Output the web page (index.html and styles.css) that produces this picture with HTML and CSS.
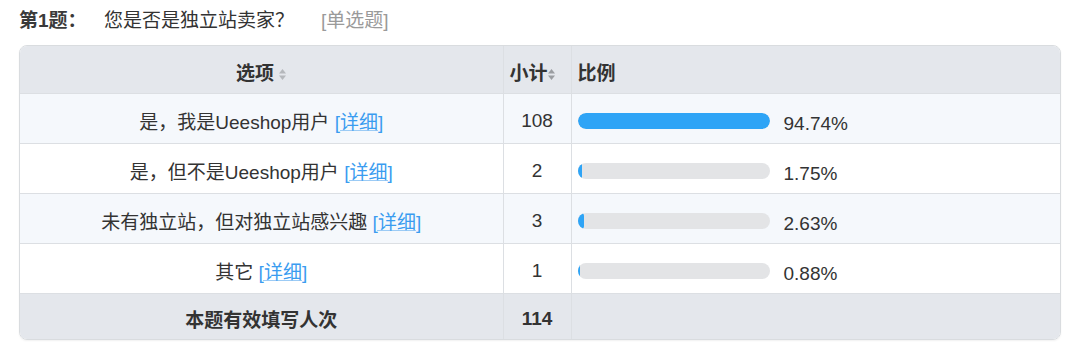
FILE: index.html
```html
<!DOCTYPE html>
<html lang="zh">
<head>
<meta charset="utf-8">
<link rel="stylesheet" href="styles.css">
</head>
<body>
<div class="question">
  <div class="q-title">
    <span class="q-num">第1题：</span>
    <span class="q-text">您是否是独立站卖家？</span>
    <span class="q-type">[单选题]</span>
  </div>
  <div class="table-wrap">
    <table class="stats">
      <thead>
        <tr>
          <th class="c-opt">选项 <span class="sort"><svg width="7" height="11" viewBox="0 0 7 11"><path d="M3.5 0 L7 4.5 H0 Z" fill="#b5b8bc"/><path d="M3.5 11 L7 6.5 H0 Z" fill="#b5b8bc"/></svg></span></th>
          <th class="c-cnt">小计<span class="sort"><svg width="7" height="11" viewBox="0 0 7 11"><path d="M3.5 0 L7 4.5 H0 Z" fill="#9a9da1"/><path d="M3.5 11 L7 6.5 H0 Z" fill="#9a9da1"/></svg></span></th>
          <th class="c-pct">比例</th>
        </tr>
      </thead>
      <tbody>
        <tr class="odd">
          <td class="c-opt">是，我是Ueeshop用户 <a class="detail">[详细]</a></td>
          <td class="c-cnt">108</td>
          <td class="c-pct"><div class="ratio"><div class="track"><div class="fill" style="width:100%"></div></div><span class="pct">94.74%</span></div></td>
        </tr>
        <tr>
          <td class="c-opt">是，但不是Ueeshop用户 <a class="detail">[详细]</a></td>
          <td class="c-cnt">2</td>
          <td class="c-pct"><div class="ratio"><div class="track"><div class="fill" style="width:4px"></div></div><span class="pct">1.75%</span></div></td>
        </tr>
        <tr class="odd">
          <td class="c-opt">未有独立站，但对独立站感兴趣 <a class="detail">[详细]</a></td>
          <td class="c-cnt">3</td>
          <td class="c-pct"><div class="ratio"><div class="track"><div class="fill" style="width:6px"></div></div><span class="pct">2.63%</span></div></td>
        </tr>
        <tr>
          <td class="c-opt">其它 <a class="detail">[详细]</a></td>
          <td class="c-cnt">1</td>
          <td class="c-pct"><div class="ratio"><div class="track"><div class="fill" style="width:2px"></div></div><span class="pct">0.88%</span></div></td>
        </tr>
      </tbody>
      <tfoot>
        <tr>
          <td class="c-opt">本题有效填写人次</td>
          <td class="c-cnt">114</td>
          <td class="c-pct"></td>
        </tr>
      </tfoot>
    </table>
  </div>
</div>
</body>
</html>
```
FILE: styles.css
```css
* { box-sizing: border-box; }
html, body { margin: 0; padding: 0; background: #fff; }
body {
  font-family: "Liberation Sans", Arial, "Noto Sans CJK SC", sans-serif;
  color: #333;
  width: 1080px;
  height: 352px;
  overflow: hidden;
}
.question { padding: 7px 19px 0 19px; }
.q-title {
  display: flex;
  align-items: baseline;
  height: 28px;
  font-size: 19px;
  line-height: 28px;
  color: #333;
}
.q-num { font-weight: bold; width: 85px; color: #3a3a3a; }
.q-text { width: 217px; }
.q-type { color: #9a9a9a; }

.table-wrap {
  margin-top: 10px;
  width: 1042px;
  border: 1px solid #d9dcdf;
  border-radius: 8px;
  overflow: hidden;
  box-shadow: 0 1px 2px rgba(0,0,0,0.06);
}
.stats {
  width: 100%;
  border-collapse: collapse;
  font-size: 19px;
  table-layout: fixed;
}
.stats th, .stats td {
  padding: 5px 0 0 0;
  border-left: 1px solid #dcdfe3;
  border-bottom: 1px solid #dcdfe3;
}
.stats th:first-child, .stats td:first-child { border-left: none; }
.stats tfoot td { border-bottom: none; }
.stats thead tr { background: #e4e7ec; height: 47px; }
.stats tbody tr { height: 50px; background: #fff; }
.stats tbody tr.odd { background: #f5f8fc; }
.stats tfoot tr { background: #e4e7ec; height: 46px; }
.stats th { font-weight: bold; font-size: 19px; color: #333; }
.c-opt { width: 483px; text-align: center; }
.c-cnt { width: 68px; text-align: center; }
th.c-cnt { text-align: left; padding-left: 6px !important; }
.c-pct { text-align: left; }
th.c-pct { padding-left: 6px !important; }
tfoot td { font-weight: bold; }
.sort { display: inline-block; vertical-align: middle; margin-top: -2px; }
.detail { color: #3a9cf0; text-decoration: underline; text-decoration-color: #9ccbf5; }

.ratio { display: flex; align-items: center; padding-left: 6px; }
.track {
  width: 192px;
  height: 16px;
  border-radius: 8px;
  background: #e3e4e6;
  overflow: hidden;
}
.fill { height: 100%; background: #2ea4f6; border-radius: 8px; }
.pct { margin-left: 14px; margin-top: 6px; font-size: 19px; color: #333; }
```
